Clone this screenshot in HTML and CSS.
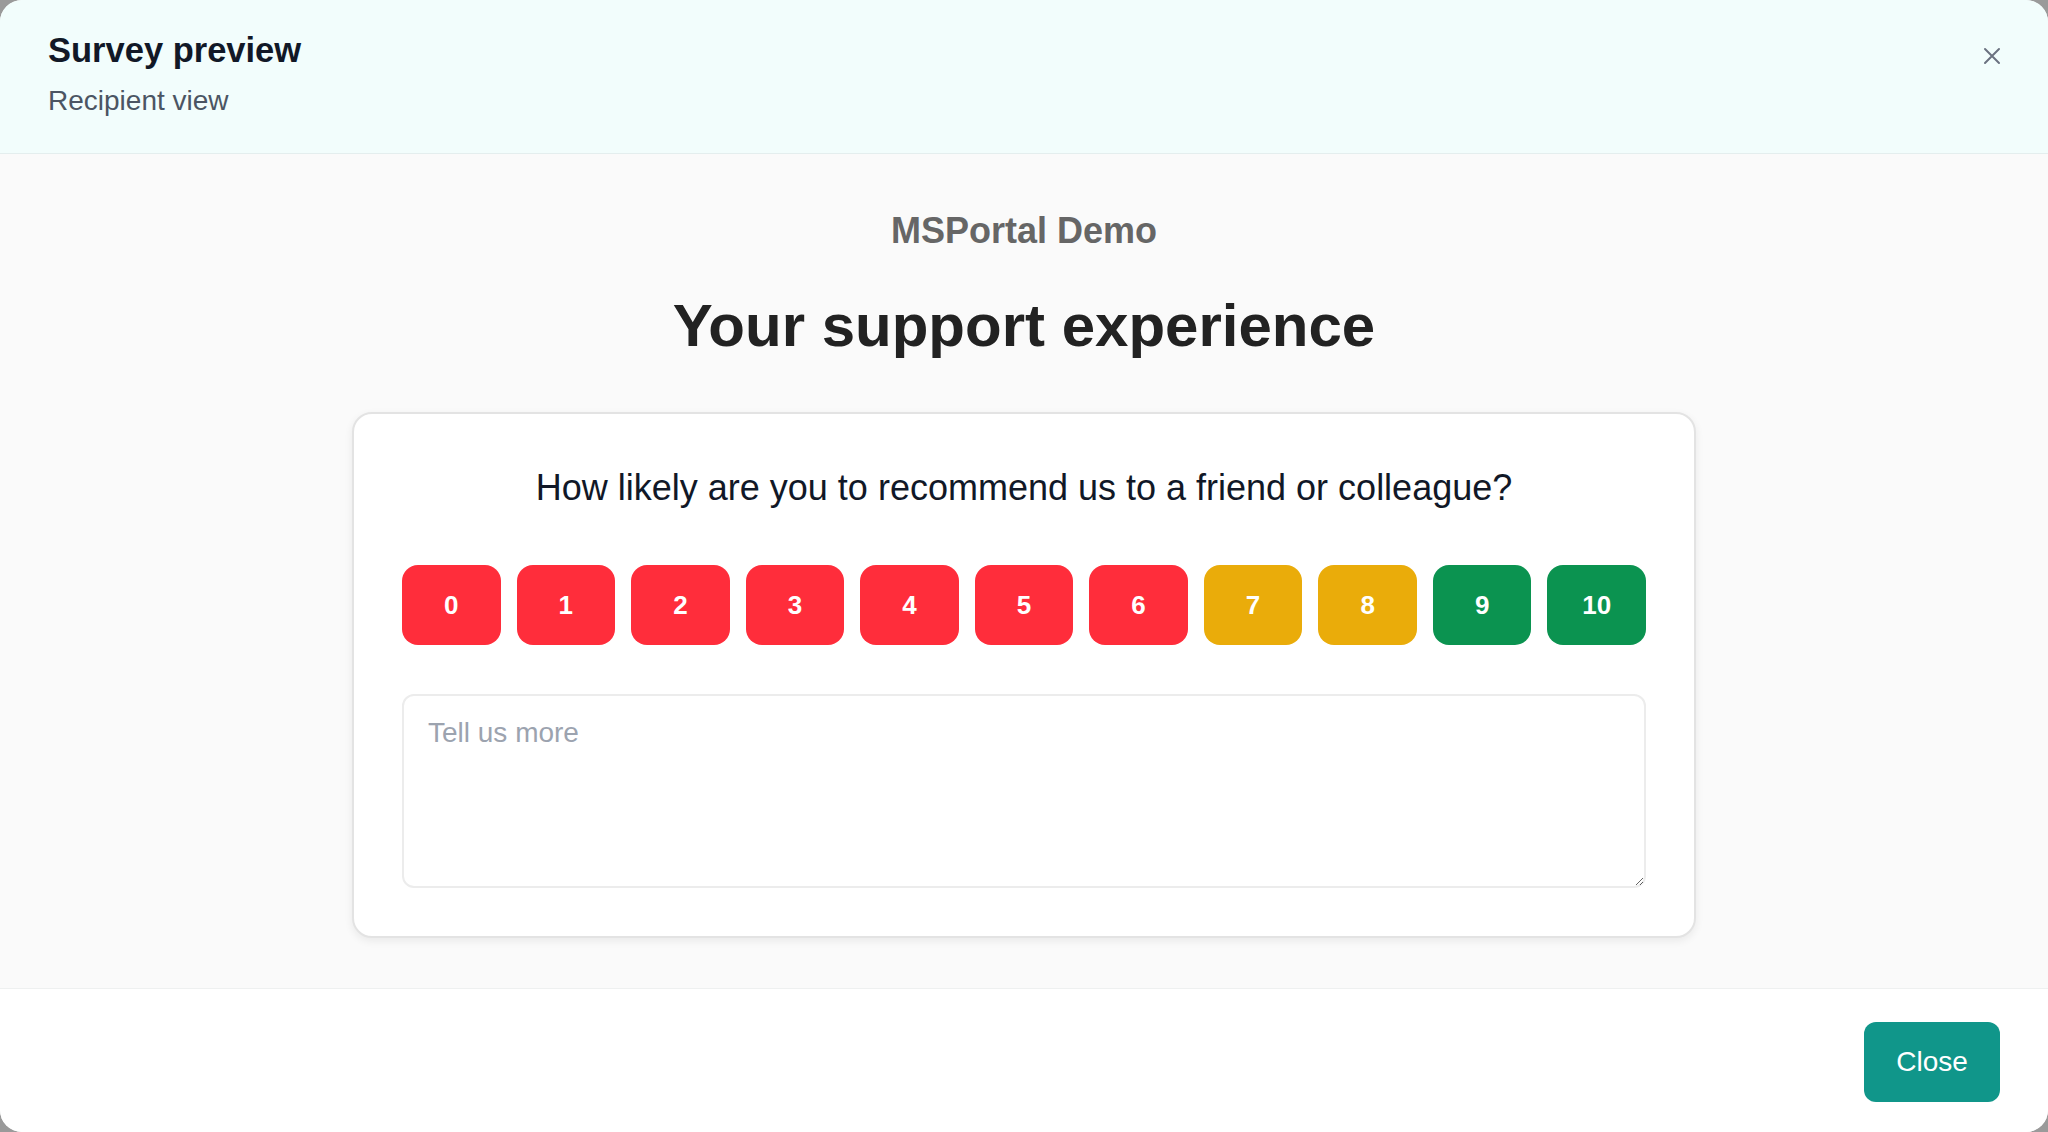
FILE: index.html
```html
<!DOCTYPE html>
<html lang="en">
<head>
<meta charset="utf-8">
<title>Survey preview</title>
<link rel="stylesheet" href="styles.css">
</head>
<body>
<div class="modal">
  <header class="modal-header">
    <div class="heading">
      <h1 class="modal-title">Survey preview</h1>
      <p class="modal-subtitle">Recipient view</p>
    </div>
    <button class="icon-close" aria-label="Close">
      <svg width="18" height="18" viewBox="0 0 18 18" fill="none" stroke="#6b7280" stroke-width="2" stroke-linecap="round"><path d="M2 2L16 16M16 2L2 16"/></svg>
    </button>
  </header>
  <main class="modal-body">
    <div class="brand">MSPortal Demo</div>
    <h2 class="survey-title">Your support experience</h2>
    <section class="card">
      <p class="question">How likely are you to recommend us to a friend or colleague?</p>
      <div class="scale">
        <button class="score red">0</button>
        <button class="score red">1</button>
        <button class="score red">2</button>
        <button class="score red">3</button>
        <button class="score red">4</button>
        <button class="score red">5</button>
        <button class="score red">6</button>
        <button class="score amber">7</button>
        <button class="score amber">8</button>
        <button class="score green">9</button>
        <button class="score green">10</button>
      </div>
      <textarea class="comment" placeholder="Tell us more"></textarea>
    </section>
  </main>
  <footer class="modal-footer">
    <button class="btn-close">Close</button>
  </footer>
</div>
</body>
</html>
```

FILE: styles.css
```css
* { box-sizing: border-box; }
html, body { margin: 0; padding: 0; }
body {
  width: 2048px;
  height: 1132px;
  background: #9a9a9a;
  font-family: "Liberation Sans", Arial, sans-serif;
  overflow: hidden;
}
.modal {
  width: 2048px;
  height: 1132px;
  border-radius: 22px;
  overflow: hidden;
  background: #fafafa;
  display: flex;
  flex-direction: column;
}
.modal-header {
  height: 154px;
  flex: none;
  background: #f2fdfc;
  border-bottom: 1px solid #e4eeee;
  padding: 30px 40px 0 48px;
  display: flex;
  justify-content: space-between;
  align-items: flex-start;
}
.modal-title {
  margin: 0;
  font-size: 34.5px;
  line-height: 40px;
  font-weight: 700;
  color: #111827;
}
.modal-subtitle {
  margin: 14px 0 0;
  font-size: 28px;
  line-height: 34px;
  color: #4b5563;
}
.icon-close {
  margin-top: 10px;
  width: 32px;
  height: 32px;
  border: 0;
  background: transparent;
  padding: 0;
  display: flex;
  align-items: center;
  justify-content: center;
  cursor: pointer;
}
.modal-body {
  flex: 1;
  padding-top: 55px;
  display: flex;
  flex-direction: column;
  align-items: center;
}
.brand {
  font-size: 36px;
  line-height: 44px;
  font-weight: 700;
  color: #666666;
}
.survey-title {
  margin: 37px 0 0;
  font-size: 60px;
  line-height: 72px;
  font-weight: 700;
  color: #222222;
}
.card {
  margin-top: 50px;
  width: 1344px;
  background: #ffffff;
  border: 2px solid #e3e3e3;
  border-radius: 20px;
  box-shadow: 0 3px 8px rgba(0, 0, 0, 0.07);
  padding: 48px;
}
.question {
  margin: 0;
  text-align: center;
  font-size: 36px;
  line-height: 52px;
  color: #111827;
}
.scale {
  margin-top: 51px;
  display: flex;
  gap: 16px;
}
.score {
  flex: 1;
  height: 80px;
  border: 0;
  border-radius: 16px;
  color: #ffffff;
  font-family: "Liberation Sans", Arial, sans-serif;
  font-size: 26px;
  font-weight: 700;
  padding: 0;
}
.score.red { background: #ff2d3b; }
.score.amber { background: #eaac0a; }
.score.green { background: #0b9350; }
.comment {
  display: block;
  margin-top: 49px;
  width: 100%;
  height: 194px;
  border: 2px solid #ececec;
  border-radius: 12px;
  padding: 20px 24px 18px;
  font-family: "Liberation Sans", Arial, sans-serif;
  font-size: 28px;
  line-height: 1.2;
  color: #111827;
  background: #ffffff;
  resize: vertical;
  outline: none;
}
.comment::placeholder { color: #9ca3af; }
.modal-footer {
  flex: none;
  height: 144px;
  background: #ffffff;
  border-top: 1px solid #eef0f0;
  padding: 33px 48px 0 0;
  display: flex;
  justify-content: flex-end;
  align-items: flex-start;
}
.btn-close {
  width: 136px;
  height: 80px;
  border: 0;
  border-radius: 12px;
  background: #10968a;
  color: #ffffff;
  font-family: "Liberation Sans", Arial, sans-serif;
  font-size: 28px;
  cursor: pointer;
}
```
